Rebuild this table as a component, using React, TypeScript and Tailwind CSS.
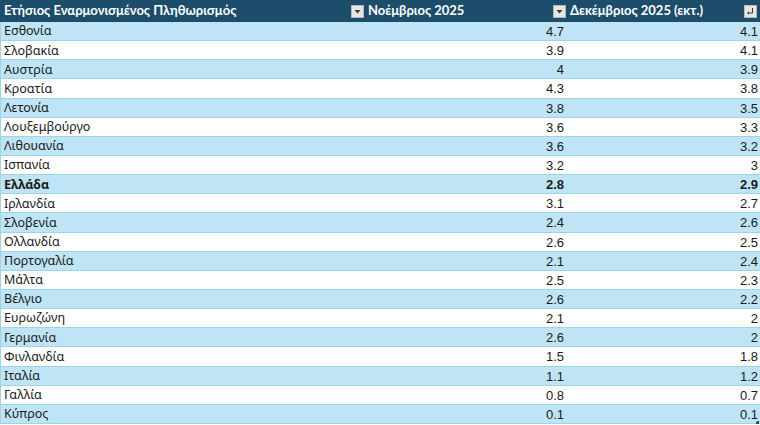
import React from 'react';

type Row = { name: string; nov: string; dec: string; bold?: boolean };

const rows: Row[] = [
    { name: 'Εσθονία', nov: '4.7', dec: '4.1' },
    { name: 'Σλοβακία', nov: '3.9', dec: '4.1' },
    { name: 'Αυστρία', nov: '4', dec: '3.9' },
    { name: 'Κροατία', nov: '4.3', dec: '3.8' },
    { name: 'Λετονία', nov: '3.8', dec: '3.5' },
    { name: 'Λουξεμβούργο', nov: '3.6', dec: '3.3' },
    { name: 'Λιθουανία', nov: '3.6', dec: '3.2' },
    { name: 'Ισπανία', nov: '3.2', dec: '3' },
    { name: 'Ελλάδα', nov: '2.8', dec: '2.9', bold: true },
    { name: 'Ιρλανδία', nov: '3.1', dec: '2.7' },
    { name: 'Σλοβενία', nov: '2.4', dec: '2.6' },
    { name: 'Ολλανδία', nov: '2.6', dec: '2.5' },
    { name: 'Πορτογαλία', nov: '2.1', dec: '2.4' },
    { name: 'Μάλτα', nov: '2.5', dec: '2.3' },
    { name: 'Βέλγιο', nov: '2.6', dec: '2.2' },
    { name: 'Ευρωζώνη', nov: '2.1', dec: '2' },
    { name: 'Γερμανία', nov: '2.6', dec: '2' },
    { name: 'Φινλανδία', nov: '1.5', dec: '1.8' },
    { name: 'Ιταλία', nov: '1.1', dec: '1.2' },
    { name: 'Γαλλία', nov: '0.8', dec: '0.7' },
    { name: 'Κύπρος', nov: '0.1', dec: '0.1' },
];

const FilterButton: React.FC<{ sort?: boolean }> = ({ sort }) => (
    <span className="w-[13px] h-[13px] bg-[#e6e6e6] border border-[#b8b8b8] flex items-center justify-center shrink-0">
        {sort ? (
            <svg width="9" height="9" viewBox="0 0 9 9">
                <path d="M6.5 1v5H2.5" stroke="#3a3a3a" strokeWidth="1" fill="none" />
                <path d="M1 6l2-1.8v3.6z" fill="#3a3a3a" />
            </svg>
        ) : (
            <svg width="7" height="5" viewBox="0 0 7 5">
                <path d="M0.5 1h6L3.5 4.5z" fill="#3a3a3a" />
            </svg>
        )}
    </span>
);

const headFont = { fontFamily: 'Lato, "Noto Sans", sans-serif' };
const textFont = { fontFamily: '"Noto Sans", "Open Sans", sans-serif' };
const numFont = { fontFamily: '"Liberation Sans", Arial, sans-serif' };

const App: React.FC = () => {
    return (
        <div className="w-[760px] h-[425px] bg-white overflow-hidden relative">
            <div className="grid grid-cols-[366px_200px_194px] h-[22px] bg-[#1c4d6b] text-white font-bold text-[13px]" style={headFont}>
                <div className="flex items-center justify-between pl-[4px] pr-[2px]">
                    <span>Ετήσιος Εναρμονισμένος Πληθωρισμός</span>
                    <FilterButton />
                </div>
                <div className="flex items-center justify-between pl-[2px] pr-[0px]">
                    <span>Νοέμβριος 2025</span>
                    <FilterButton />
                </div>
                <div className="flex items-center justify-between pl-[4px] pr-[3px]">
                    <span>Δεκέμβριος 2025 (εκτ.)</span>
                    <FilterButton sort />
                </div>
            </div>
            {rows.map((r, i) => (
                <div
                    key={r.name}
                    className={`grid grid-cols-[366px_200px_194px] h-[19.15px] border-b border-[#9fd3ec] border-l ${i % 2 === 0 ? 'bg-[#bfe4f5]' : 'bg-white'} text-[#1a1a1a] ${r.bold ? 'font-bold' : ''}`}
                >
                    <div className="flex items-center pl-[3px] text-[12.5px]" style={textFont}>{r.name}</div>
                    <div className="flex items-center justify-end pr-[3px] text-[13px]" style={numFont}>{r.nov}</div>
                    <div className="flex items-center justify-end pr-[3px] text-[13px]" style={numFont}>{r.dec}</div>
                </div>
            ))}
            <span className="absolute right-[1px] bottom-[1px] w-[3px] h-[3px] border-r-2 border-b-2 border-[#1c4d6b]" />
        </div>
    );
};

export default App;
